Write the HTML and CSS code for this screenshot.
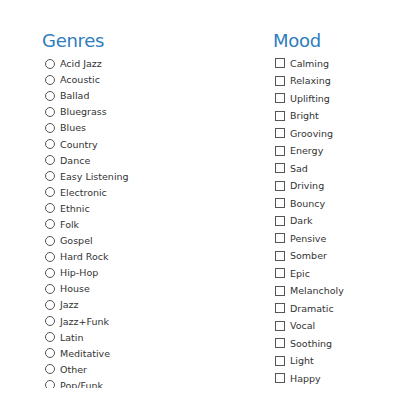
FILE: index.html
```html
<!DOCTYPE html>
<html>
<head>
<meta charset="utf-8">
<link rel="stylesheet" href="styles.css">
</head>
<body>
<div class="page">
  <section class="col col-genres">
    <h2 class="title">Genres</h2>
    <ul class="list list-radio">
      <li><span class="radio"></span>Acid Jazz</li>
      <li><span class="radio"></span>Acoustic</li>
      <li><span class="radio"></span>Ballad</li>
      <li><span class="radio"></span>Bluegrass</li>
      <li><span class="radio"></span>Blues</li>
      <li><span class="radio"></span>Country</li>
      <li><span class="radio"></span>Dance</li>
      <li><span class="radio"></span>Easy Listening</li>
      <li><span class="radio"></span>Electronic</li>
      <li><span class="radio"></span>Ethnic</li>
      <li><span class="radio"></span>Folk</li>
      <li><span class="radio"></span>Gospel</li>
      <li><span class="radio"></span>Hard Rock</li>
      <li><span class="radio"></span>Hip-Hop</li>
      <li><span class="radio"></span>House</li>
      <li><span class="radio"></span>Jazz</li>
      <li><span class="radio"></span>Jazz+Funk</li>
      <li><span class="radio"></span>Latin</li>
      <li><span class="radio"></span>Meditative</li>
      <li><span class="radio"></span>Other</li>
      <li><span class="radio"></span>Pop/Funk</li>
    </ul>
  </section>
  <section class="col col-mood">
    <h2 class="title">Mood</h2>
    <ul class="list list-check">
      <li><span class="check"></span>Calming</li>
      <li><span class="check"></span>Relaxing</li>
      <li><span class="check"></span>Uplifting</li>
      <li><span class="check"></span>Bright</li>
      <li><span class="check"></span>Grooving</li>
      <li><span class="check"></span>Energy</li>
      <li><span class="check"></span>Sad</li>
      <li><span class="check"></span>Driving</li>
      <li><span class="check"></span>Bouncy</li>
      <li><span class="check"></span>Dark</li>
      <li><span class="check"></span>Pensive</li>
      <li><span class="check"></span>Somber</li>
      <li><span class="check"></span>Epic</li>
      <li><span class="check"></span>Melancholy</li>
      <li><span class="check"></span>Dramatic</li>
      <li><span class="check"></span>Vocal</li>
      <li><span class="check"></span>Soothing</li>
      <li><span class="check"></span>Light</li>
      <li><span class="check"></span>Happy</li>
    </ul>
  </section>
</div>
</body>
</html>
```
FILE: styles.css
```css
html, body {
  margin: 0;
  padding: 0;
  background: #ffffff;
}
body {
  font-family: "DejaVu Sans", Verdana, sans-serif;
  color: #333333;
  width: 400px;
  height: 411px;
  overflow: hidden;
}
.page {
  display: grid;
  grid-template-columns: 231px 1fr;
  padding: 30px 0 0 42px;
}
.title {
  margin: 0;
  font-family: "DejaVu Sans", sans-serif;
  font-weight: normal;
  font-size: 18px;
  line-height: 22px;
  color: #2f7dbd;
  letter-spacing: -0.3px;
}
.list {
  list-style: none;
  margin: 0;
  padding: 0;
  font-size: 9.5px;
}
.list li {
  display: flex;
  align-items: center;
}
.list-radio {
  margin-top: 3.5px;
  height: 332px;
  overflow: hidden;
}
.list-radio li {
  height: 16.1px;
  padding-left: 3px;
}
.list-check {
  margin-top: 2.7px;
}
.list-check li {
  height: 17.5px;
  padding-left: 2px;
}
.radio {
  width: 8px;
  height: 8px;
  border: 1px solid #555555;
  border-radius: 50%;
  margin-right: 5px;
  flex: none;
}
.check {
  width: 8px;
  height: 8px;
  border: 1px solid #555555;
  margin-right: 5px;
  flex: none;
}
```
